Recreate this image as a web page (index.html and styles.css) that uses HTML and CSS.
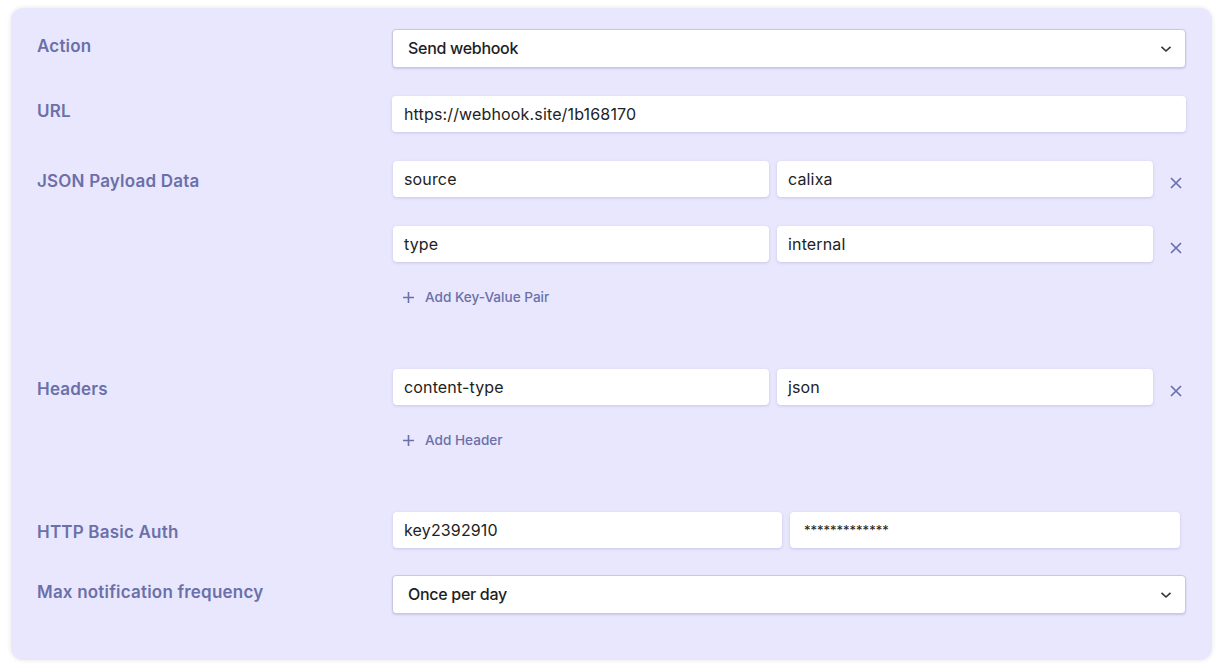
FILE: index.html
```html
<!DOCTYPE html>
<html>
<head>
<meta charset="utf-8">
<link rel="stylesheet" href="styles.css">
</head>
<body>
<div class="panel">
  <div class="row row-action">
    <div class="label">Action</div>
    <div class="field">
      <div class="select"><span>Send webhook</span>
        <svg class="chev" width="12" height="8" viewBox="0 0 12 8"><path d="M1.5 1.8 L6 6 L10.5 1.8" fill="none" stroke="#333" stroke-width="1.6"/></svg>
      </div>
    </div>
  </div>
  <div class="row row-url">
    <div class="label">URL</div>
    <div class="field">
      <div class="input">https://webhook.site/1b168170</div>
    </div>
  </div>
  <div class="row row-json">
    <div class="label">JSON Payload Data</div>
    <div class="field">
      <div class="kv">
        <div class="input">source</div>
        <div class="input">calixa</div>
        <svg class="x" width="12" height="12" viewBox="0 0 12 12"><path d="M1 1 L11 11 M11 1 L1 11" stroke="#6b70aa" stroke-width="1.7"/></svg>
      </div>
      <div class="kv">
        <div class="input">type</div>
        <div class="input">internal</div>
        <svg class="x" width="12" height="12" viewBox="0 0 12 12"><path d="M1 1 L11 11 M11 1 L1 11" stroke="#6b70aa" stroke-width="1.7"/></svg>
      </div>
      <div class="add">
        <svg width="11" height="11" viewBox="0 0 11 11"><path d="M5.5 0 V11 M0 5.5 H11" stroke="#6b70aa" stroke-width="1.6"/></svg>
        <span>Add Key-Value Pair</span>
      </div>
    </div>
  </div>
  <div class="row row-headers">
    <div class="label">Headers</div>
    <div class="field">
      <div class="kv">
        <div class="input">content-type</div>
        <div class="input">json</div>
        <svg class="x" width="12" height="12" viewBox="0 0 12 12"><path d="M1 1 L11 11 M11 1 L1 11" stroke="#6b70aa" stroke-width="1.7"/></svg>
      </div>
      <div class="add">
        <svg width="11" height="11" viewBox="0 0 11 11"><path d="M5.5 0 V11 M0 5.5 H11" stroke="#6b70aa" stroke-width="1.6"/></svg>
        <span>Add Header</span>
      </div>
    </div>
  </div>
  <div class="row row-auth">
    <div class="label">HTTP Basic Auth</div>
    <div class="field">
      <div class="auth">
        <div class="input">key2392910</div>
        <div class="input pw">*************</div>
      </div>
    </div>
  </div>
  <div class="row row-max">
    <div class="label">Max notification frequency</div>
    <div class="field">
      <div class="select"><span>Once per day</span>
        <svg class="chev" width="12" height="8" viewBox="0 0 12 8"><path d="M1.5 1.8 L6 6 L10.5 1.8" fill="none" stroke="#333" stroke-width="1.6"/></svg>
      </div>
    </div>
  </div>
</div>
</body>
</html>
```
FILE: styles.css
```css
* { box-sizing: border-box; }
html, body { margin: 0; padding: 0; background: #fff; }
body {
  font-family: Inter, "Noto Sans", sans-serif;
  padding: 8px 9px 9px 11px;
}
.panel {
  width: 1201px;
  height: 652px;
  background: #e9e7fd;
  border-radius: 12px;
  box-shadow: 0 0 5px rgba(0,0,0,0.10);
  padding: 21px 26px 0 26px;
}
.row {
  display: grid;
  grid-template-columns: 355px 794px;
}
.label {
  font-size: 17px;
  font-weight: 600;
  color: #6b70aa;
  line-height: 20px;
  letter-spacing: 0.2px;
}
.row-action { margin-bottom: 28px; }
.row-action .label { padding-top: 7px; }
.row-url { margin-bottom: 29px; }
.row-url .label { padding-top: 5px; }
.row-json .label { padding-top: 10px; }
.row-json { margin-bottom: 62px; }
.row-headers .label { padding-top: 10px; }
.row-headers { margin-bottom: 62px; }
.row-auth { margin-bottom: 27px; }
.row-auth .label { padding-top: 10px; }
.row-max .label { padding-top: 7px; }

.select {
  height: 39px;
  background: #fff;
  border: 1px solid #c9c8e3;
  border-radius: 4px;
  box-shadow: 0 1px 2px rgba(110,110,180,0.25);
  display: flex;
  align-items: center;
  justify-content: space-between;
  padding: 0 13px 2px 15px;
  font-size: 16px;
  font-weight: 500;
  letter-spacing: -0.3px;
  color: #1e1e1e;
}
.chev { margin-top: 3px; }
.input {
  height: 36px;
  background: #fff;
  border-radius: 4px;
  box-shadow: 0 1px 3px rgba(120,115,200,0.30);
  display: flex;
  align-items: center;
  padding: 0 11px;
  font-size: 16px;
  letter-spacing: 0.15px;
  color: #222;
}
.row-url .input { padding-left: 12px; }
.kv {
  display: flex;
  align-items: center;
  padding-left: 1px;
}
.kv + .kv { margin-top: 29px; }
.kv .input { width: 376px; }
.kv .input + .input { margin-left: 8px; }
.kv .x { margin-left: 17px; margin-top: 7px; }
.add {
  display: flex;
  align-items: center;
  margin-top: 25px;
  height: 20px;
  padding-left: 11px;
  font-size: 13.6px;
  font-weight: 500;
  color: #6b70aa;
}
.add svg { margin-right: 11px; }
.auth {
  display: flex;
  padding-left: 1px;
}
.auth .input { width: 389px; }
.auth .input + .input { margin-left: 8px; width: 390px; }
.pw { font-size: 13px; padding-left: 14px; letter-spacing: 0; }
```
